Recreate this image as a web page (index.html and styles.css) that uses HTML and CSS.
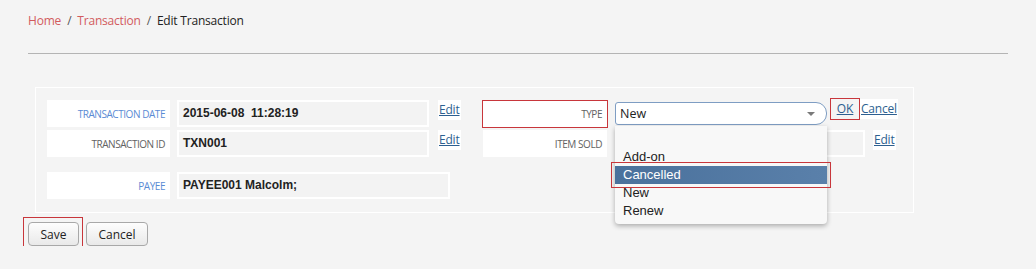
FILE: index.html
```html
<!DOCTYPE html>
<html lang="en">
<head>
    <meta charset="UTF-8">
    <meta name="viewport" content="width=device-width, initial-scale=1.0">
    <title>Edit Transaction</title>
    <link rel="stylesheet" href="styles.css">
</head>
<body>
    <div class="page">
        <nav class="breadcrumb">
            <a href="#">Home</a><span class="sep">/</span><a href="#">Transaction</a><span class="sep">/</span><span class="current">Edit Transaction</span>
        </nav>
        <hr class="divider">

        <div class="panel">
            <div class="col col-left">
                <div class="field">
                    <div class="label label-blue">Transaction Date</div>
                    <div class="value">2015-06-08&nbsp; 11:28:19</div>
                    <a class="edit" href="#">Edit</a>
                </div>
                <div class="field field-next">
                    <div class="label">Transaction ID</div>
                    <div class="value">TXN001</div>
                    <a class="edit" href="#">Edit</a>
                </div>
                <div class="field field-apart">
                    <div class="label label-blue">Payee</div>
                    <div class="value value-payee">PAYEE001 Malcolm;</div>
                </div>
            </div>

            <div class="col col-right">
                <div class="field">
                    <div class="label label-type marked">Type</div>
                    <div class="select-wrap">
                        <div class="select">New<span class="caret"></span></div>
                        <ul class="dropdown">
                            <li>&nbsp;</li>
                            <li>Add-on</li>
                            <li class="selected marked">Cancelled</li>
                            <li>New</li>
                            <li>Renew</li>
                        </ul>
                    </div>
                    <a class="ok marked" href="#">OK</a><a class="cancel-link" href="#">Cancel</a>
                </div>
                <div class="field field-next">
                    <div class="label">Item Sold</div>
                    <div class="value value-item"></div>
                    <a class="edit" href="#">Edit</a>
                </div>
            </div>
        </div>

        <div class="actions">
            <div class="save-mark"><button class="btn btn-save">Save</button></div>
            <button class="btn btn-cancel">Cancel</button>
        </div>
    </div>
</body>
</html>
```

FILE: styles.css
```css
body {
    margin: 0;
    background-color: #f4f4f4;
    font-family: 'Open Sans', 'Noto Sans', sans-serif;
    color: #222;
}

.page {
    padding: 0 28px;
}

.breadcrumb {
    padding-top: 12px;
    height: 18px;
    line-height: 18px;
    font-size: 12px;
    letter-spacing: -0.2px;
}

.breadcrumb a {
    color: #d25b5e;
    text-decoration: none;
}

.breadcrumb .sep {
    color: #555;
    margin: 0 6px;
}

.breadcrumb .current {
    color: #222;
}

.divider {
    margin: 23px 0 0;
    border: none;
    border-top: 1px solid #b4b4b4;
    height: 0;
}

.panel {
    margin: 33px 0 0 7px;
    width: 866px;
    height: 112px;
    border: 1px solid #fff;
    padding: 12px 0 0 11px;
    display: flex;
}

.col-left {
    width: 436px;
}

.field {
    display: flex;
    align-items: flex-start;
    height: 27px;
}

.field-next {
    margin-top: 3px;
}

.field-apart {
    margin-top: 15px;
}

.label {
    width: 123px;
    height: 27px;
    box-sizing: border-box;
    background-color: #fff;
    text-align: right;
    padding-right: 5px;
    font-size: 10px;
    line-height: 29px;
    text-transform: uppercase;
    color: #626262;
    letter-spacing: -0.45px;
}

.label-blue {
    color: #5a8bd4;
}

.col-right .label {
    width: 124px;
}

.label-type {
    margin-top: 1px;
    height: 26px;
    line-height: 27px;
}

.value {
    margin-left: 7px;
    width: 252px;
    height: 27px;
    box-sizing: border-box;
    border: 2px solid #fff;
    background-color: #f3f3f3;
    padding-left: 4px;
    font-family: 'Liberation Sans', Arial, sans-serif;
    font-weight: bold;
    font-size: 12px;
    line-height: 23px;
    color: #222;
}

.value-payee {
    width: 273px;
}

.value-item {
    margin-left: 8px;
    width: 250px;
}

.edit {
    margin-left: 9px;
    padding: 0 1px;
    background-color: #fff;
    height: 20px;
    line-height: 20px;
    font-size: 12px;
    letter-spacing: -0.2px;
    color: #2d5f90;
    text-decoration: underline;
}

.value-item + .edit {
    margin-left: 8px;
}

.marked {
    outline: 1px solid #c8363b;
}

.select-wrap {
    position: relative;
    margin: 2px 0 0 8px;
}

.select {
    width: 212px;
    height: 23px;
    box-sizing: border-box;
    border: 1px solid #7e9dc3;
    border-radius: 3px 11px 11px 3px;
    background-color: #fff;
    padding-left: 4px;
    font-size: 12.5px;
    line-height: 21px;
    color: #222;
    position: relative;
}

.caret {
    position: absolute;
    right: 11px;
    top: 9px;
    border-left: 4px solid transparent;
    border-right: 4px solid transparent;
    border-top: 4px solid #7a7a7a;
}

.dropdown {
    position: absolute;
    top: 24px;
    left: 0;
    width: 212px;
    height: 98px;
    box-sizing: border-box;
    margin: 0;
    padding: 4px 0 0;
    list-style: none;
    background-color: #f8f8f8;
    border-radius: 0 0 4px 4px;
    box-shadow: 0 2px 5px rgba(0, 0, 0, 0.3);
    font-family: 'Liberation Sans', Arial, sans-serif;
    font-size: 13px;
    color: #222;
    z-index: 2;
}

.dropdown li {
    height: 18px;
    line-height: 18px;
    padding-left: 8px;
}

.dropdown .selected {
    background: linear-gradient(to right, #4a719c, #5a80aa);
    color: #fff;
    outline-offset: 3px;
}

.ok {
    margin: -1px 0 0 4px;
    width: 28px;
    height: 20px;
    text-align: center;
    line-height: 20px;
    font-size: 12px;
    color: #2d5f90;
}

.cancel-link {
    margin: -1px 0 0 1px;
    padding: 0 1px;
    height: 20px;
    background-color: #fff;
    line-height: 20px;
    font-size: 12px;
    letter-spacing: -0.2px;
    color: #2d5f90;
}

.actions {
    margin-top: 9px;
    display: flex;
    align-items: flex-start;
    gap: 7px;
}

.save-mark {
    border: 1px solid #c8363b;
    padding: 4px 3px 4px 4px;
    margin: -5px -4px -5px -5px;
}

.btn {
    display: block;
    height: 24px;
    box-sizing: border-box;
    border: 1px solid #a8a8a8;
    border-radius: 4px;
    background: linear-gradient(to bottom, #fdfdfd, #e9e9e9);
    font-family: 'Open Sans', 'Noto Sans', sans-serif;
    font-size: 12px;
    color: #222;
    padding: 0;
}

.btn-save {
    width: 51px;
}

.btn-cancel {
    width: 62px;
}
```
